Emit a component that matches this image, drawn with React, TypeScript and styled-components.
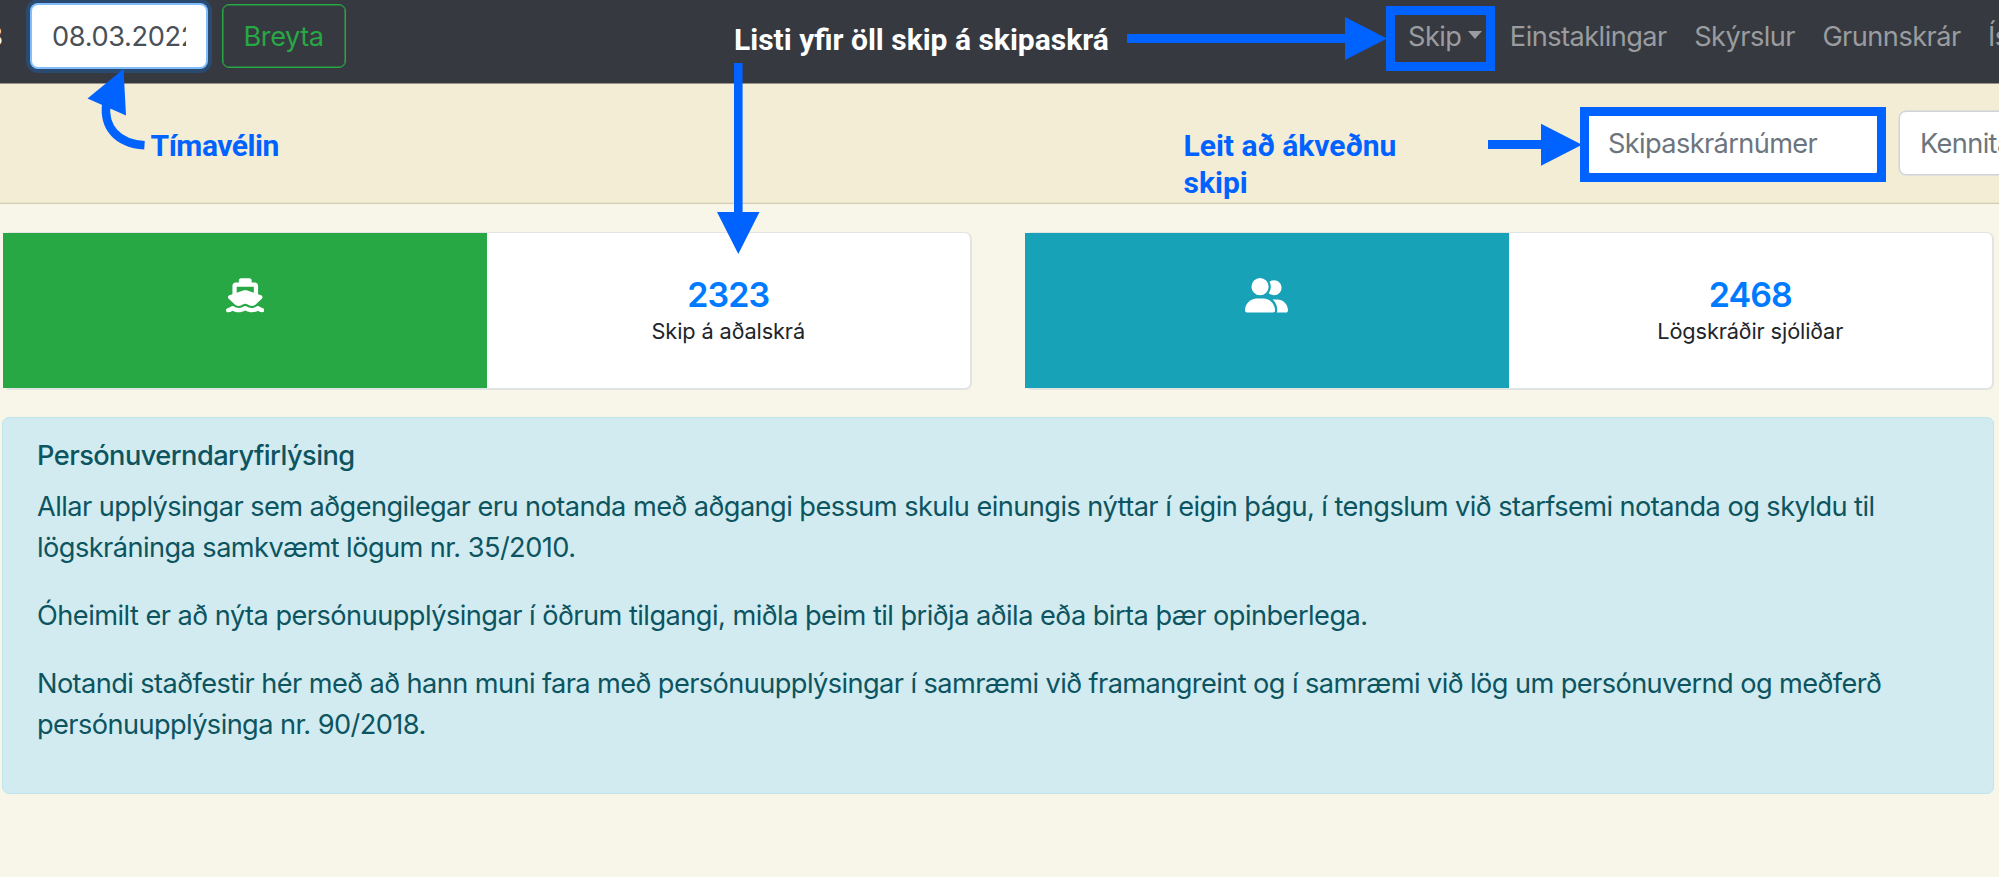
import React from 'react';
import styled, { createGlobalStyle } from 'styled-components';
import { FaShip, FaUserGroup } from 'react-icons/fa6';

const GlobalStyle = createGlobalStyle`
  *, *::before, *::after { box-sizing: border-box; }
  html, body { margin: 0; height: 100%; overflow: hidden; }
  body {
    background: #f8f5e9;
    color: #212529;
    font-family: Inter, "Liberation Sans", sans-serif;
    font-size: 27.2px;
    line-height: 41px;
  }
`;

const BLUE = '#0062ff';

const Page = styled.div`
  position: relative;
  height: 877px;
  overflow: hidden;
`;

const Navbar = styled.header`
  display: flex;
  align-items: center;
  height: 84px;
  padding: 4px 0 15px;
  background: #363940;
  border-bottom: 1px solid #98948a;
  white-space: nowrap;
`;

const CutLabel = styled.span`
  display: flex;
  justify-content: flex-end;
  flex: none;
  width: 3px;
  margin-right: 28px;
  color: #fff;
`;

const Field = styled.input<{ $width: number; $focused?: boolean }>`
  flex: none;
  width: ${p => p.$width}px;
  height: 64px;
  padding: 0 20px;
  border: 1px solid ${p => (p.$focused ? '#80bdff' : '#ced4da')};
  border-radius: 7px;
  background: #fff;
  color: #495057;
  font: inherit;
  letter-spacing: ${p => (p.$focused ? -0.35 : -0.63)}px;
  outline: none;
  box-shadow: ${p =>
    p.$focused ? '0 0 0 1px #80bdff, 0 0 0 5px #2a4a70' : '0 0 0 0.5px #ced4da'};
  &::placeholder { color: #6c757d; opacity: 1; }
`;

const OutlineButton = styled.button`
  flex: none;
  width: 124px;
  height: 64px;
  margin-left: 14.5px;
  padding: 0;
  border: 1.7px solid #28a745;
  border-radius: 7px;
  box-shadow: inset 0 0 0 0.5px #28a745;
  background: transparent;
  color: #28a745;
  font: inherit;
  letter-spacing: -0.5px;
`;

const NavLinks = styled.nav`
  display: flex;
  gap: 27.4px;
  margin-left: 1062.5px;
`;

const NavLink = styled.a`
  display: flex;
  color: #9a9c9f;
  letter-spacing: -0.54px;
`;

const Caret = styled.span`
  margin: 15px 0 0 7px;
  width: 0;
  height: 0;
  border: solid transparent;
  border-width: 8px 7.5px 0;
  border-top-color: #9a9c9f;
`;

const SearchBar = styled.section`
  display: flex;
  align-items: flex-start;
  gap: 20px;
  height: 120px;
  padding: 27px 0 0 1587px;
  background: #f4edd5;
  border-bottom: 1px solid #d3cbb2;
  box-shadow: inset 0 -1px 0 #ebe4cc;
`;

const Cards = styled.section`
  display: grid;
  grid-template-columns: 969px 969px;
  column-gap: 53px;
  margin: 28px 0 0 3px;
`;

const Card = styled.article`
  display: grid;
  grid-template-columns: 1fr 1fr;
  height: 158px;
  border: solid #e2e3e3;
  border-width: 1px 2px 2px 0;
  border-radius: 7px;
  background: #fff;
`;

const IconPane = styled.div<{ $color: string; $iconWidth: number }>`
  display: flex;
  justify-content: center;
  padding-top: 45px;
  background: ${p => p.$color};
  color: #fff;
  svg { width: ${p => p.$iconWidth}px; height: 34.5px; }
`;

const Stat = styled.div`
  display: flex;
  flex-direction: column;
  align-items: center;
  padding-top: 41px;
`;

const StatNumber = styled.a`
  color: #007bff;
  font-size: 34px;
  font-weight: 600;
  letter-spacing: -0.95px;
`;

const StatLabel = styled.span`
  font-size: 21.76px;
  line-height: 32.6px;
  letter-spacing: -0.12px;
`;

const Notice = styled.section`
  width: 1992px;
  height: 377px;
  margin: 27px 0 0 2px;
  padding: 22px 34px;
  border: 1.7px solid #bee5eb;
  border-radius: 7px;
  background: #d1ebf0;
  color: #0c5460;
  white-space: nowrap;
`;

const NoticeTitle = styled.h5`
  margin: 0 0 13px;
  font-size: 27.2px;
  font-weight: 500;
  line-height: 32.6px;
  letter-spacing: -0.54px;
`;

const NoticeText = styled.p<{ $spacing?: number }>`
  margin: 0 0 27px;
  letter-spacing: ${p => p.$spacing ?? -0.56}px;
`;

const Annotations = styled.div`
  position: absolute;
  inset: 0;
  pointer-events: none;
`;

const Arrows = styled.svg`
  position: absolute;
  inset: 0;
`;

const Note = styled.div<{ $x: number; $y: number; $light?: boolean; $spacing?: number }>`
  position: absolute;
  left: ${p => p.$x}px;
  top: ${p => p.$y}px;
  color: ${p => (p.$light ? '#fff' : BLUE)};
  font: 700 30px/36.6px Roboto, sans-serif;
  letter-spacing: ${p => p.$spacing ?? 0}px;
  white-space: nowrap;
`;

const Highlight = styled.div<{ $x: number; $y: number; $w: number; $h: number }>`
  position: absolute;
  left: ${p => p.$x}px;
  top: ${p => p.$y}px;
  width: ${p => p.$w}px;
  height: ${p => p.$h}px;
  border: 9px solid ${BLUE};
`;

export default function App() {
  return (
    <Page>
      <GlobalStyle />
      <Navbar>
        <CutLabel>8</CutLabel>
        <Field $width={176} $focused defaultValue="08.03.2022" />
        <OutlineButton>Breyta</OutlineButton>
        <NavLinks>
          <NavLink>Skip<Caret /></NavLink>
          <NavLink>Einstaklingar</NavLink>
          <NavLink>Skýrslur</NavLink>
          <NavLink>Grunnskrár</NavLink>
          <NavLink>Ís</NavLink>
        </NavLinks>
      </Navbar>

      <SearchBar>
        <Field $width={292} placeholder="Skipaskrárnúmer" />
        <Field $width={292} placeholder="Kennitala" />
      </SearchBar>

      <Cards>
        <Card>
          <IconPane $color="#28a745" $iconWidth={38.5}><FaShip /></IconPane>
          <Stat>
            <StatNumber>2323</StatNumber>
            <StatLabel>Skip á aðalskrá</StatLabel>
          </Stat>
        </Card>
        <Card>
          <IconPane $color="#17a2b8" $iconWidth={43}><FaUserGroup /></IconPane>
          <Stat>
            <StatNumber>2468</StatNumber>
            <StatLabel>Lögskráðir sjóliðar</StatLabel>
          </Stat>
        </Card>
      </Cards>

      <Notice>
        <NoticeTitle>Persónuverndaryfirlýsing</NoticeTitle>
        <NoticeText>
          Allar upplýsingar sem aðgengilegar eru notanda með aðgangi þessum skulu einungis nýttar í eigin þágu, í tengslum við starfsemi notanda og skyldu til
          <br />
          lögskráninga samkvæmt lögum nr. 35/2010.
        </NoticeText>
        <NoticeText $spacing={-0.53}>
          Óheimilt er að nýta persónuupplýsingar í öðrum tilgangi, miðla þeim til þriðja aðila eða birta þær opinberlega.
        </NoticeText>
        <NoticeText $spacing={-0.585}>
          Notandi staðfestir hér með að hann muni fara með persónuupplýsingar í samræmi við framangreint og í samræmi við lög um persónuvernd og meðferð
          <br />
          persónuupplýsinga nr. 90/2018.
        </NoticeText>
      </Notice>

      <Annotations>
        <Highlight $x={1386} $y={6} $w={109} $h={65} />
        <Highlight $x={1580} $y={107} $w={306} $h={74.5} />
        <Arrows width="1999" height="877" fill={BLUE}>
          <path d="M1127 34H1345V17L1387 38.5L1345 60V43H1127Z" />
          <path d="M734 63H742.6V212H759.5L738.3 254L717 212H734Z" />
          <path d="M1488 140H1541V123.7L1582 144.7L1541 165.7V149H1488Z" />
          <path d="M123.5 69L126 115.5L87.5 98.5Z" />
          <path d="M106.3 104C103.5 127 117 143.5 144.5 145.3" fill="none" stroke={BLUE} strokeWidth="8.5" />
        </Arrows>
        <Note $x={734} $y={22} $light>Listi yfir öll skip á skipaskrá</Note>
        <Note $x={1183.5} $y={128}>Leit að ákveðnu<br />skipi</Note>
        <Note $x={150.5} $y={128} $spacing={-0.46}>Tímavélin</Note>
      </Annotations>
    </Page>
  );
}
